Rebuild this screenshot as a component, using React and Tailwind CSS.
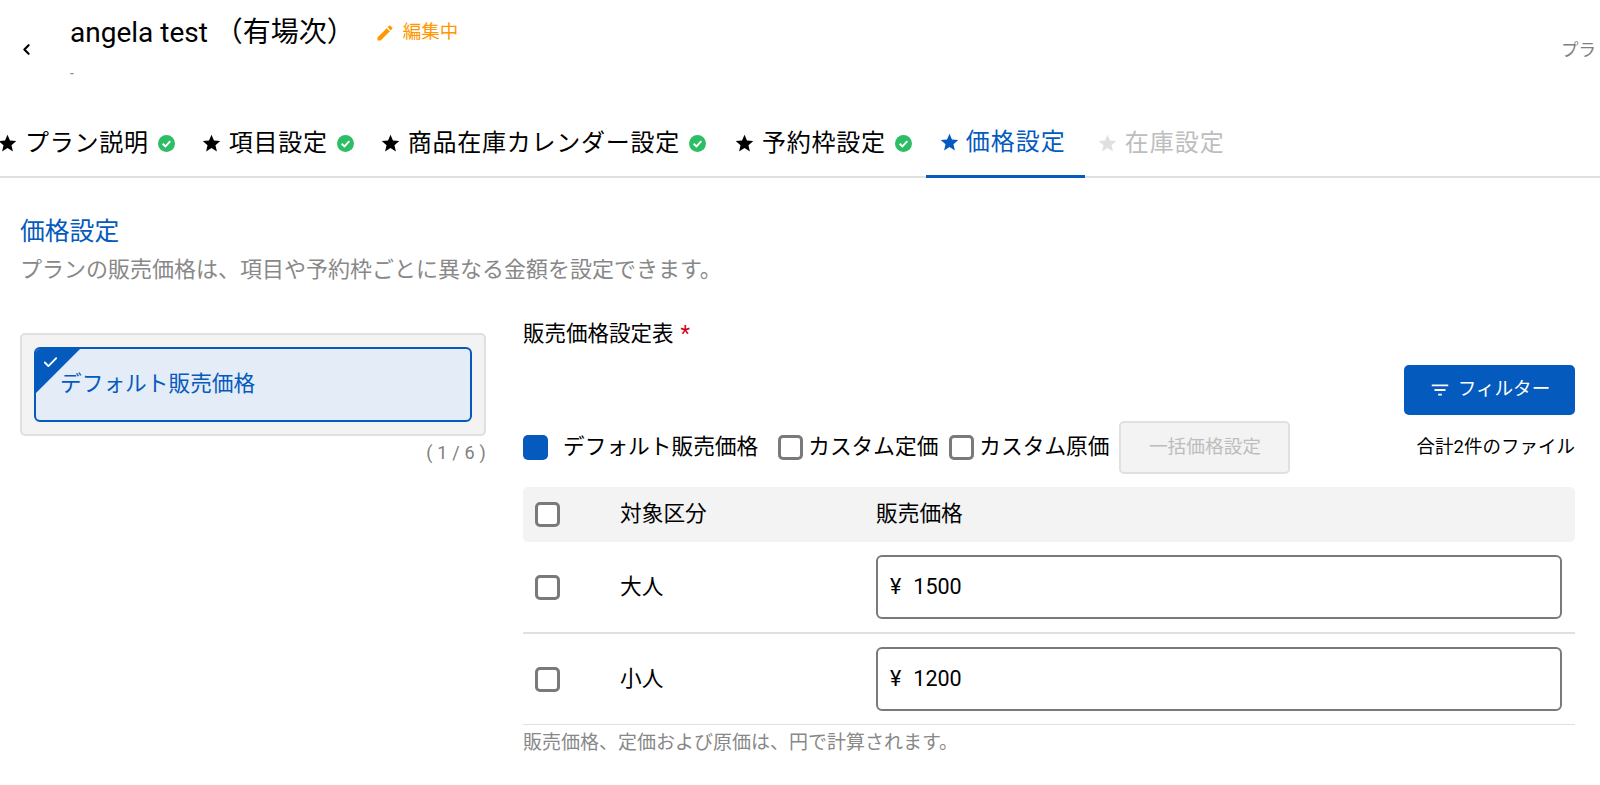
import { Check, ChevronLeft } from 'lucide-react'

const FONT = 'font-["Roboto","Noto_Sans_CJK_JP",sans-serif]'

function Star({ className }) {
  return (
    <svg viewBox="0 0 24 24" className={className} fill="currentColor">
      <path d="M12 17.27 18.18 21l-1.64-7.03L22 9.24l-7.19-.61L12 2 9.19 8.63 2 9.24l5.46 4.73L5.82 21z" />
    </svg>
  )
}

function DoneMark() {
  return (
    <svg viewBox="0 0 16 16" className="h-[17px] w-[17px] shrink-0">
      <circle cx="8" cy="8" r="8" fill="#2dbd65" />
      <path d="M4.4 8.2 7 10.8l4.6-5" fill="none" stroke="#fff" strokeWidth="1.8" />
    </svg>
  )
}

function Box({ className = '' }) {
  return <span className={`block h-[25px] w-[25px] shrink-0 rounded-[5px] border-[3px] border-[#7a7a7a] bg-white ${className}`} />
}

function Tab({ label, className = '' }) {
  return (
    <div className={`flex items-center pt-[12px] text-black ${className}`}>
      <Star className="h-[21px] w-[21px] shrink-0" />
      <span className="ml-[7px] text-[24px] tracking-[0.75px]">{label}</span>
      <span className="ml-[9px]"><DoneMark /></span>
    </div>
  )
}

function PriceRow({ label, price, last }) {
  return (
    <div className={`flex items-center pl-3 ${last ? 'h-[91px] border-b border-[#e0e0e0]' : 'h-[92px] border-b-2 border-[#e0e0e0]'}`}>
      <Box />
      <span className="ml-[60px] w-[256px] text-[21.7px] text-black">{label}</span>
      <div className="flex h-[64px] w-[686px] items-center rounded-[6px] border-2 border-[#7a7a7a] pl-3 text-[21.5px] text-black">
        <span>¥</span>
        <span className="ml-[12px]">{price}</span>
      </div>
    </div>
  )
}

export default function App() {
  return (
    <div className={`h-[785px] w-full overflow-hidden bg-white ${FONT}`}>
      {/* header */}
      <div className="flex h-[98px] items-start">
        <ChevronLeft className="ml-[18px] mt-[41px] h-[17px] w-[17px] text-black" strokeWidth={3} />
        <div className="ml-[35px] mt-[15px]">
          <div className="flex items-center">
            <span className="text-[28px] leading-[36px] text-black">angela test （有場次）</span>
            <svg viewBox="0 0 24 24" className="ml-[20px] h-[20px] w-[20px] text-[#ff9800]" fill="currentColor">
              <path d="M3 17.25V21h3.75L17.81 9.94l-3.75-3.75L3 17.25zM20.71 7.04c.39-.39.39-1.02 0-1.41l-2.34-2.34c-.39-.39-1.02-.39-1.41 0l-1.83 1.83 3.75 3.75 1.83-1.83z" />
            </svg>
            <span className="ml-[8px] text-[18.5px] text-[#ff9800]">編集中</span>
          </div>
          <div className="mt-[12px] text-[14px] text-[#888]">-</div>
        </div>
        <span className="ml-auto mt-[37px] w-[39px] overflow-hidden whitespace-nowrap text-[17.5px] text-[#808080]">プラ</span>
      </div>

      {/* tabs */}
      <div className="h-[80px] border-b-2 border-[#e0e0e0]">
        <div className="-ml-[3px] flex h-[78px] items-stretch">
          <Tab label="プラン説明" />
          <Tab label="項目設定" className="ml-[26px]" />
          <Tab label="商品在庫カレンダー設定" className="ml-[26px]" />
          <Tab label="予約枠設定" className="ml-[28px]" />
          <div className="relative ml-[14px] flex w-[159px] items-center pl-[13px] pt-[10px] text-[#045abd]">
            <Star className="h-[21px] w-[21px] shrink-0" />
            <span className="ml-[6px] text-[24px] tracking-[1px]">価格設定</span>
            <span className="absolute inset-x-0 -bottom-[2px] h-[3px] bg-[#045abd]" />
          </div>
          <div className="ml-[12px] flex items-center pt-[12px] text-[#bdbdbd]">
            <Star className="h-[21px] w-[21px] shrink-0 text-[#e0e0e0]" />
            <span className="ml-[7px] text-[24px] tracking-[1px]">在庫設定</span>
          </div>
        </div>
      </div>

      {/* section */}
      <div className="px-5 pt-[36px]">
        <h2 className="text-[24.8px] leading-[36px] text-[#045abd]">価格設定</h2>
        <p className="mt-[6px] text-[22px] leading-[28px] text-[#888]">プランの販売価格は、項目や予約枠ごとに異なる金額を設定できます。</p>
      </div>

      <div className="mt-[35px] flex items-start pl-5">
        {/* left */}
        <div className="mt-[14px] w-[466px]">
          <div className="rounded-[5px] border-2 border-[#e0e0e0] bg-[#f3f3f3] p-3">
            <div className="relative flex h-[75px] items-center overflow-hidden rounded-[6px] border-2 border-[#045abd] bg-[#e4ecf7] pl-[24px] text-[21.7px] text-[#045abd]">
              <svg viewBox="0 0 44 44" className="absolute left-0 top-0 h-[44px] w-[44px]">
                <path d="M0 0h44L0 44z" fill="#045abd" />
              </svg>
              <Check className="absolute left-[6px] top-[5px] h-[17px] w-[17px] text-white" strokeWidth={2.5} />
              <span className="relative">デフォルト販売価格</span>
            </div>
          </div>
          <div className="mt-[3px] text-right text-[18px] tracking-[0.2px] text-[#808080]">( 1 / 6 )</div>
        </div>

        {/* right */}
        <div className="ml-[37px] w-[1052px]">
          <div className="text-[21.5px] leading-[30px] text-black">
            販売価格設定表<span className="ml-[7px] text-[22px] leading-[20px] text-[#d0021b]">*</span>
          </div>
          <div className="mt-[16px] flex justify-end">
            <button className="flex h-[50px] w-[171px] items-center justify-center rounded-[5px] bg-[#045abd] text-[18.6px] text-white">
              <svg viewBox="0 0 24 24" className="h-[22px] w-[22px]" fill="currentColor">
                <path d="M10 18h4v-2h-4v2zM3 6v2h18V6H3zm3 7h12v-2H6v2z" />
              </svg>
              <span className="ml-[7px]">フィルター</span>
            </button>
          </div>
          <div className="mt-[6px] flex h-[53px] items-center">
            <span className="block h-[25px] w-[25px] rounded-[5px] bg-[#045abd]" />
            <span className="ml-[15px] text-[21.7px] text-black">デフォルト販売価格</span>
            <Box className="ml-[20px]" />
            <span className="ml-[5px] text-[21.7px] text-black">カスタム定価</span>
            <Box className="ml-[11px]" />
            <span className="ml-[5px] text-[21.7px] text-black">カスタム原価</span>
            <button className="ml-[10px] h-[53px] w-[171px] rounded-[5px] border-2 border-[#e0e0e0] bg-[#f3f3f3] text-[18.7px] text-[#bdbdbd]">一括価格設定</button>
            <span className="ml-auto text-[18.5px] text-black">合計2件のファイル</span>
          </div>
          <div className="mt-[13px] flex h-[55px] items-center rounded-[5px] bg-[#f3f3f3] pl-3">
            <Box />
            <span className="ml-[60px] w-[256px] text-[21.7px] text-black">対象区分</span>
            <span className="text-[21.7px] text-black">販売価格</span>
          </div>
          <PriceRow label="大人" price="1500" />
          <PriceRow label="小人" price="1200" last />
          <p className="mt-[5px] text-[19px] leading-[26px] text-[#888]">販売価格、定価および原価は、円で計算されます。</p>
        </div>
      </div>
    </div>
  )
}
